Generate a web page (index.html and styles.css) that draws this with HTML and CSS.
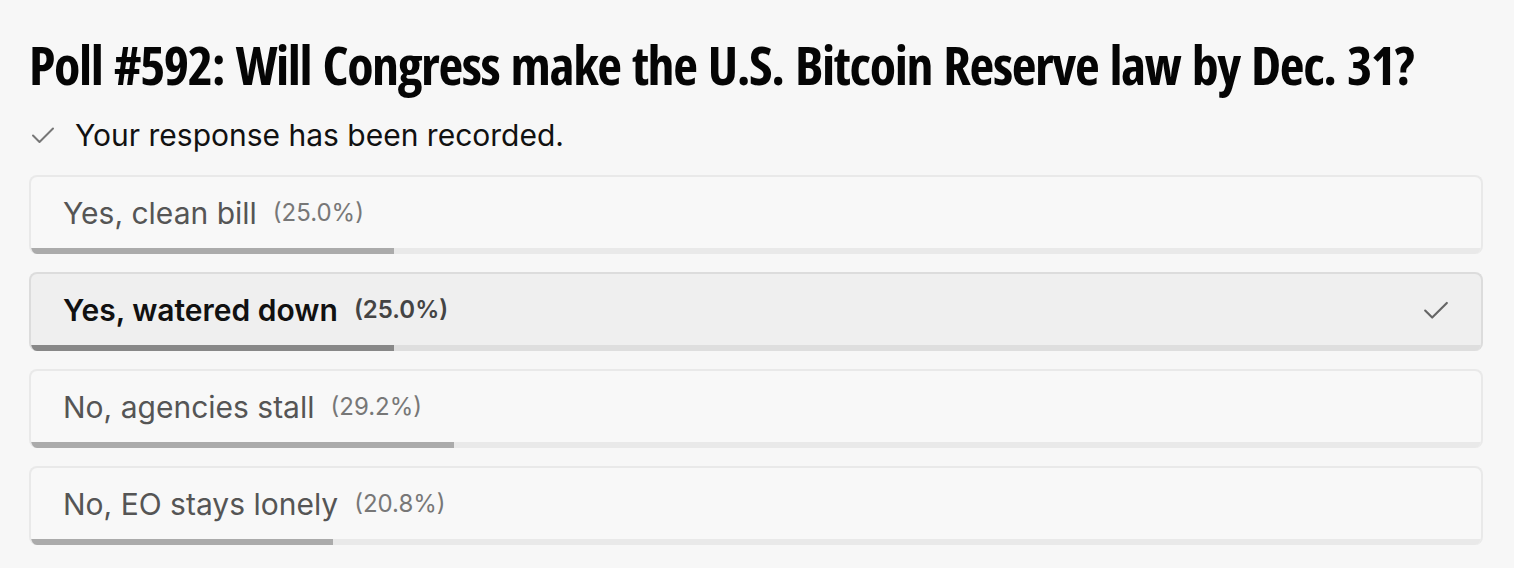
FILE: index.html
```html
<!DOCTYPE html>
<html lang="en">
  <head>
    <meta charset="UTF-8" />
    <meta name="viewport" content="width=device-width, initial-scale=1.0" />
    <title>Poll #592</title>

    <link rel="stylesheet" href="styles.css">
  </head>
  <body>
    <div class="poll">
      <h1 class="poll-title">Poll #592: Will Congress make the U.S. Bitcoin Reserve law by Dec. 31?</h1>

      <div class="poll-status">
        <svg class="check" viewBox="0 0 24 24" width="24" height="24">
          <polyline points="2 12.5 8.5 19 22 5.5" />
        </svg>
        <span>Your response has been recorded.</span>
      </div>

      <div class="options">
        <div class="option">
          <div class="option-body">
            <span class="option-label">Yes, clean bill</span>
            <span class="option-pct">(25.0%)</span>
          </div>
          <div class="bar"><div class="bar-fill" style="width: 25%"></div></div>
        </div>

        <div class="option selected">
          <div class="option-body">
            <span class="option-label">Yes, watered down</span>
            <span class="option-pct">(25.0%)</span>
            <svg class="check option-check" viewBox="0 0 24 24" width="26" height="26">
              <polyline points="2 12.5 8.5 19 22 5.5" />
            </svg>
          </div>
          <div class="bar"><div class="bar-fill" style="width: 25%"></div></div>
        </div>

        <div class="option">
          <div class="option-body">
            <span class="option-label">No, agencies stall</span>
            <span class="option-pct">(29.2%)</span>
          </div>
          <div class="bar"><div class="bar-fill" style="width: 29.2%"></div></div>
        </div>

        <div class="option">
          <div class="option-body">
            <span class="option-label">No, EO stays lonely</span>
            <span class="option-pct">(20.8%)</span>
          </div>
          <div class="bar"><div class="bar-fill" style="width: 20.8%"></div></div>
        </div>
      </div>
    </div>
  </body>
</html>
```

FILE: styles.css
```css
body {
  margin: 0;
  background-color: #f7f7f7;
  font-family: Inter, "Noto Sans", sans-serif;
  color: #111;
}

.poll {
  padding: 28px 31px 0 29px;
}

.poll-title {
  margin: 0;
  font-family: "Open Sans", "DejaVu Sans Condensed", sans-serif;
  font-size: 54px;
  font-weight: 700;
  font-stretch: 75%;
  letter-spacing: -1.4px;
  word-spacing: 3px;
  line-height: 72px;
  white-space: nowrap;
  color: #050505;
}

.poll-status {
  display: flex;
  align-items: center;
  gap: 20px;
  margin: 17px 0 22px 2px;
  font-size: 30px;
  line-height: 36px;
}

.check {
  fill: none;
  stroke: #777;
  stroke-width: 2;
  stroke-linecap: round;
  stroke-linejoin: round;
}

.options {
  display: flex;
  flex-direction: column;
  gap: 18px;
}

.option {
  display: flex;
  flex-direction: column;
  border: 2px solid #e9e9e9;
  border-bottom: 0;
  border-radius: 8px;
  overflow: hidden;
  background-color: #f8f8f8;
}

.option-body {
  display: flex;
  align-items: center;
  height: 71px;
  padding: 0 32px;
}

.option-label {
  font-size: 30px;
  color: #555;
}

.option-pct {
  margin-left: 16px;
  font-size: 24px;
  color: #777;
}

.bar {
  height: 6px;
  background-color: #e9e9e9;
}

.bar-fill {
  height: 100%;
  background-color: #ababab;
}

.option.selected {
  border-color: #dcdcdc;
  background-color: #efefef;
}

.option.selected .option-label {
  font-weight: 600;
  color: #111;
}

.option.selected .option-pct {
  font-weight: 600;
  color: #444;
}

.option.selected .bar {
  background-color: #dedede;
}

.option.selected .bar-fill {
  background-color: #888;
}

.option-check {
  margin-left: auto;
  stroke: #666;
}
```
